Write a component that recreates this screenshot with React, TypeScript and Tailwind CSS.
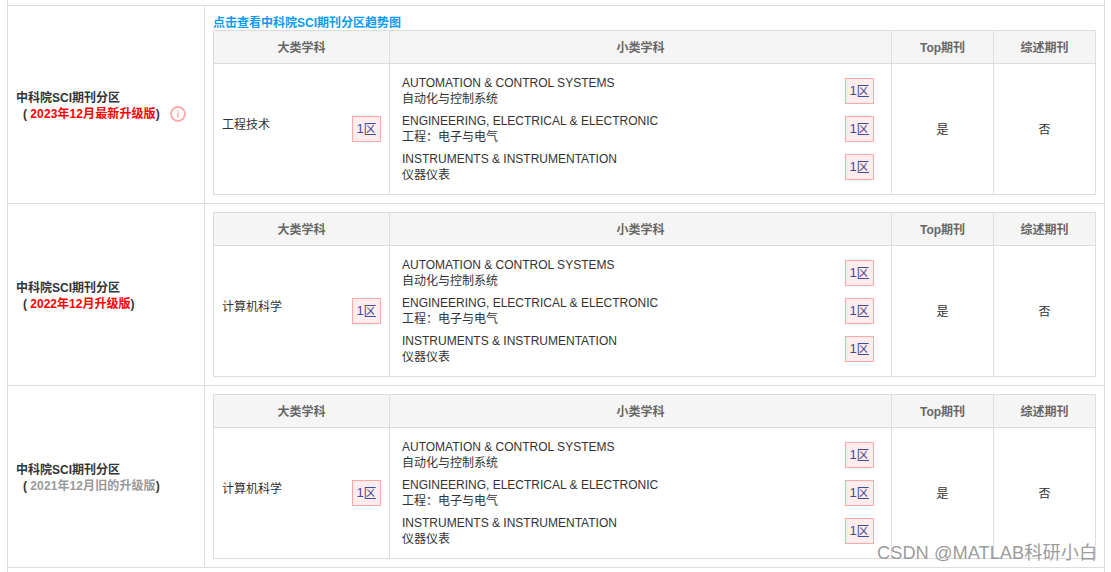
const FONT = "font-['Liberation_Sans','Noto_Sans_CJK_SC',sans-serif]";

const SUBS = [
  { en: "AUTOMATION & CONTROL SYSTEMS", cn: "自动化与控制系统" },
  { en: "ENGINEERING, ELECTRICAL & ELECTRONIC", cn: "工程：电子与电气" },
  { en: "INSTRUMENTS & INSTRUMENTATION", cn: "仪器仪表" },
];

function Badge() {
  return (
    <span className="flex h-[26px] w-[29px] shrink-0 items-center justify-center border border-[#ffa8a8] bg-[#ffecec] text-[13px] text-[#3b4f9b]">
      1区
    </span>
  );
}

function Partition({ subject }: { subject: string }) {
  return (
    <div className="grid w-[883px] grid-cols-[176px_502px_102px_101px] border border-[#ddd] text-[12px] text-[#333]">
      <div className="flex h-[33px] items-center justify-center border-r border-b border-[#ddd] bg-[#f5f5f5] pt-[2px] font-bold text-[#666]">大类学科</div>
      <div className="flex h-[33px] items-center justify-center border-r border-b border-[#ddd] bg-[#f5f5f5] pt-[2px] font-bold text-[#666]">小类学科</div>
      <div className="flex h-[33px] items-center justify-center border-r border-b border-[#ddd] bg-[#f5f5f5] pt-[2px] font-bold text-[#666]">Top期刊</div>
      <div className="flex h-[33px] items-center justify-center border-b border-[#ddd] bg-[#f5f5f5] pt-[2px] font-bold text-[#666]">综述期刊</div>

      <div className="flex h-[130px] items-center justify-between border-r border-[#ddd] pr-2 pl-2">
        <span className="-mt-[8px]">{subject}</span>
        <Badge />
      </div>
      <div className="flex h-[130px] flex-col gap-[6px] border-r border-[#ddd] pt-[11px] pr-[17px] pl-3">
        {SUBS.map((s) => (
          <div key={s.en} className="flex h-8 items-center justify-between">
            <div className="leading-4">
              <div>{s.en}</div>
              <div>{s.cn}</div>
            </div>
            <Badge />
          </div>
        ))}
      </div>
      <div className="flex h-[130px] items-center justify-center border-r border-[#ddd] pt-[2px]">是</div>
      <div className="flex h-[130px] items-center justify-center pt-[2px]">否</div>
    </div>
  );
}

function Row({ label, labelClass, subject, link, info }: { label: string; labelClass: string; subject: string; link?: boolean; info?: boolean }) {
  return (
    <div className="grid grid-cols-[197px_1fr] border-b border-[#ddd]">
      <div className="flex items-center border-r border-[#ddd] pt-[2px] pl-2 text-[12px] font-bold text-[#333]">
        <div className="leading-4">
          <div>中科院SCI期刊分区</div>
          <div className="flex items-center">
            <span className="pl-[7px]">(&nbsp;</span>
            <span className={labelClass}>{label}</span>
            <span>)</span>
            {info && (
              <svg viewBox="0 0 16 16" className="ml-[10px] h-4 w-4 text-[#ffa8a8]" fill="none" stroke="currentColor">
                <circle cx="8" cy="8" r="7" strokeWidth="1.8" />
                <path d="M8 6.5v5M8 4v1.4" strokeWidth="1.4" />
              </svg>
            )}
          </div>
        </div>
      </div>
      <div className="p-2">
        {link && <div className="h-4 pt-px text-[12px] leading-4 font-bold text-[#0a9bf5]">点击查看中科院SCI期刊分区趋势图</div>}
        <Partition subject={subject} />
      </div>
    </div>
  );
}

export default function App() {
  return (
    <div className={`relative h-[572px] w-[1111px] overflow-hidden bg-white ${FONT}`}>
      <div className="ml-[7px] w-[1098px] border-x border-[#ddd]">
        <div className="h-[6px] border-b border-[#ddd]" />
        <Row label="2023年12月最新升级版" labelClass="text-[#f00] tracking-[0.1px]" subject="工程技术" link info />
        <Row label="2022年12月升级版" labelClass="text-[#f00]" subject="计算机科学" />
        <Row label="2021年12月旧的升级版" labelClass="text-[#999] tracking-[0.1px]" subject="计算机科学" />
        <div className="h-6" />
      </div>
      <div className="absolute top-[541px] left-[877px] text-[18.3px] leading-6 whitespace-nowrap text-[#8f8f8f]/90">CSDN @MATLAB科研小白</div>
    </div>
  );
}
